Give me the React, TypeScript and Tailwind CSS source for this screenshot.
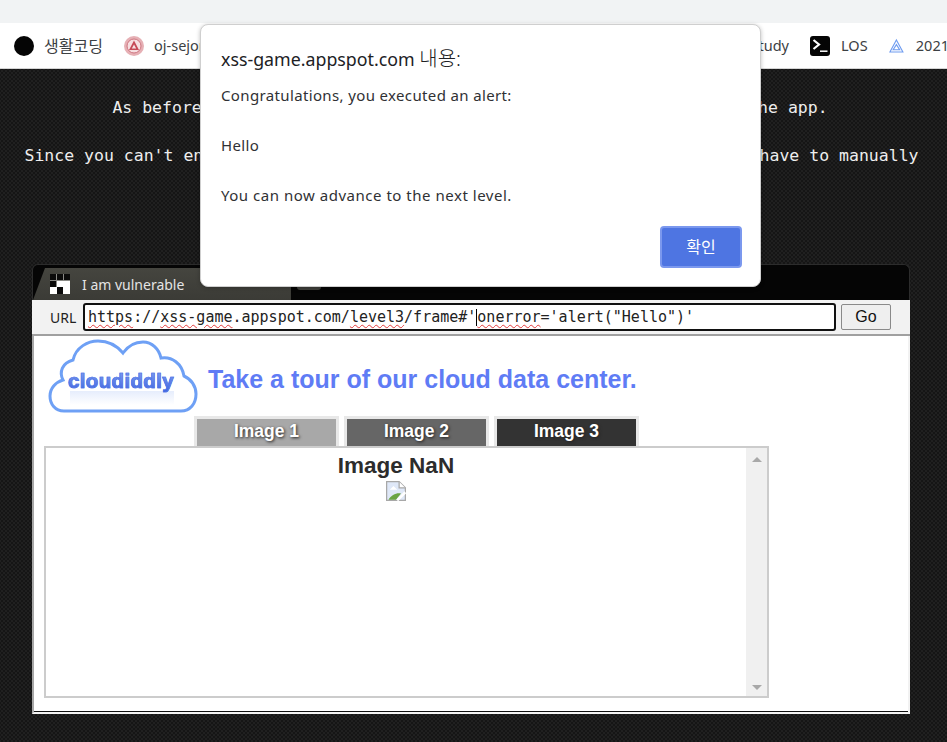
const mono = "font-['DejaVu_Sans_Mono','Liberation_Mono',monospace]";
const ui = "font-['Noto_Sans','Noto_Sans_CJK_KR',sans-serif]";
const arial = "font-['Liberation_Sans',Arial,sans-serif]";

const Bookmark = ({ icon, label, className, labelClass = "text-[14.5px]" }: { icon?: React.ReactNode; label: string; className: string; labelClass?: string }) => (
  <div className={`flex shrink-0 items-center gap-[10px] ${className}`}>
    {icon}
    <span className={`whitespace-nowrap text-[#3c4043] ${labelClass}`}>{label}</span>
  </div>
);

const SealIcon = () => (
  <svg width="20" height="20" viewBox="0 0 20 20" aria-hidden="true">
    <circle cx="10" cy="10" r="10" fill="#e6b0b5" />
    <circle cx="10" cy="10" r="7" fill="#f6dfe1" stroke="#cf7580" />
    <path d="M10 4.5 L15 14 H5 Z M10 8.5 L12.2 12.5 H7.8 Z" fill="#c64a57" fillRule="evenodd" />
  </svg>
);

const TerminalIcon = () => (
  <svg width="20" height="20" viewBox="0 0 20 20" aria-hidden="true">
    <rect width="20" height="20" rx="3" fill="#050505" />
    <path d="M3.5 4 L9 8.5 L3.5 13" fill="none" stroke="#fff" strokeWidth="2.2" />
    <path d="M10 15.2 H17.5" stroke="#fff" strokeWidth="1.5" />
  </svg>
);

const PrismIcon = () => (
  <svg width="16" height="16" viewBox="0 0 16 16" aria-hidden="true">
    <path d="M8 1.5 L15 14.5 H1 Z M8 6.5 L4.5 12 H11.5 Z" fill="none" stroke="#6f9cf0" strokeWidth="1.2" />
  </svg>
);

const CloudLogo = () => (
  <div className="relative mt-[3px] ml-[4px] h-[76px] w-[150px] shrink-0 self-start">
    <svg width="150" height="76" viewBox="0 0 150 76" className="absolute inset-0" aria-hidden="true">
      <path
        d="M16 72 C7 72 2 65 2 57 C2 49 8 43 15 41 C11 33 14 24 25 21 C28 8 40 2 50 2 C61 2 70 8 75 14 C80 7 87 3 95 3 C104 3 111 10 113 19 C124 17 134 25 136 37 C143 40 148 47 148 55 C148 65 142 72 133 72 Z"
        fill="#ffffff"
        stroke="#6ea0f5"
        strokeWidth="3"
      />
    </svg>
    <div className="absolute top-[52px] left-[22px] h-[14px] w-[104px] bg-linear-to-b from-[#e6edfc] to-white" />
    <span
      className={`absolute top-[30px] left-[20px] bg-linear-to-b from-[#86a2f2] to-[#3d63df] bg-clip-text text-[20.5px] leading-[24px] font-bold tracking-[0.35px] text-transparent [-webkit-text-stroke:0.7px_#4f74e6] ${arial}`}
    >
      cloudiddly
    </span>
  </div>
);

const BrokenImage = () => (
  <svg width="20" height="20" viewBox="0 0 16 16" aria-hidden="true">
    <path d="M0.5 0.5 H10.5 L15.5 5.5 V15.5 H0.5 Z" fill="#dfe8f8" stroke="#a8a8a8" />
    <path d="M10.5 0.5 V5.5 H15.5" fill="#fff" stroke="#a8a8a8" />
    <path d="M3 7 L6 4 L9 7 Z" fill="#fff" />
    <path d="M2 15 C4 11 9 9 12 10 L8 15 Z" fill="#6ba544" />
    <path d="M9 15.5 L15.5 9" stroke="#fff" strokeWidth="2" />
  </svg>
);

const Tab = ({ label, className }: { label: string; className: string }) => (
  <div className="border-x-[3px] border-t-[3px] border-[#e8e8e8]">
    <div
      className={`flex h-[27px] w-[139px] items-center justify-center pb-[2px] text-[17.5px] font-bold text-white [text-shadow:1px_1px_3px_#222] ${arial} ${className}`}
    >
      {label}
    </div>
  </div>
);

const SpellCheck = ({ children }: { children: string }) => (
  <span className="underline decoration-[#e23b3b] decoration-wavy decoration-1 underline-offset-2">{children}</span>
);

export default function App() {
  return (
    <div className="relative flex h-[742px] w-[947px] flex-col overflow-hidden bg-[#171717]">
      <div className="h-[23px] bg-[#f1f3f4]" />
      <div className={`flex h-[46px] items-center overflow-hidden border-b border-[#d5d5d5] bg-white pl-[14px] ${ui}`}>
        <Bookmark
          className="w-[110px]"
          icon={<span className="size-[20px] rounded-full bg-[#050505]" />}
          label="생활코딩"
          labelClass="text-[16px]"
        />
        <Bookmark className="w-[560px]" icon={<SealIcon />} label="oj-sejong" />
        <Bookmark className="w-[126px] justify-end pr-[21px]" label="Study" />
        <Bookmark className="w-[79px] gap-[11px]" icon={<TerminalIcon />} label="LOS" />
        <Bookmark className="w-[60px] gap-[12px]" icon={<PrismIcon />} label="2021" />
      </div>

      <main className="flex flex-1 flex-col bg-[radial-gradient(#202020_1px,transparent_1px),radial-gradient(#202020_1px,#151515_1px)] bg-size-[4px_4px] bg-position-[0_0,2px_2px] pt-[26px]">
        <div className={`flex flex-col items-center gap-[23px] pr-[4px] text-[16.5px] leading-[25px] whitespace-nowrap text-[#eeeeee] ${mono}`}>
          <p className="pr-[3px]">As before, you can also use the URL bar to interact with all of the app.</p>
          <p>Since you can't enter the address in the embedded frame's URL bar, so you have to manually</p>
        </div>

        <section className="mt-[96px] ml-[32px] flex w-[878px] flex-col">
          <div className="flex h-[36px] rounded-t-[6px] border border-b-0 border-[#2c2c2c] bg-[#050505]">
            <div className="mt-[3px] flex h-[32px] w-[258px] items-center gap-[12px] bg-linear-to-b from-[#45453f] to-[#3b3b36] pl-[17px] [clip-path:polygon(12px_0,100%_0,100%_100%,0_100%)]">
              <svg width="20" height="20" viewBox="0 0 30 30" shapeRendering="crispEdges" aria-hidden="true">
                <rect width="30" height="30" fill="#8a8a86" />
                <path d="M0 0h9v9H0zM11 0h8v9h-8zM21 0h9v9h-9zM0 10h9v9H0zM10 20h10v10H10z" fill="#0a0a0a" />
                <path d="M10 10h20v10H10zM0 20h10v10H0zM20 20h10v10H20z" fill="#fff" />
              </svg>
              <span className={`text-[14px] text-[#e4e4e4] ${ui}`}>I am vulnerable</span>
            </div>
            <div className="mt-[15px] ml-[6px] h-[10px] w-[24px] rounded-b-[3px] bg-[#3f3f3a]" />
          </div>

          <div className="flex h-[36px] items-center gap-[5px] border-b-[2px] border-[#a0a0a0] bg-[#f2f2f2] pl-[18px]">
            <span className={`w-[28px] text-[14px] text-[#222] ${ui}`}>URL</span>
            <div className={`flex h-[28px] w-[753px] items-center rounded-[3px] border-2 border-[#111] bg-white pl-[3px] text-[15px] text-[#222] whitespace-nowrap ${mono}`}>
              <SpellCheck>https</SpellCheck>://<SpellCheck>xss-game</SpellCheck>.appspot.com/<SpellCheck>level3</SpellCheck>/frame#'
              <span className="h-[17px] w-px bg-black" />
              <SpellCheck>onerror</SpellCheck>='alert("Hello")'
            </div>
            <button
              type="button"
              className={`h-[26px] w-[50px] rounded-[2px] border border-[#8a8a8a] bg-[#efefef] text-[16px] text-[#111] ${arial}`}
            >
              Go
            </button>
          </div>

          <div className="flex flex-col border-r-[2px] border-b-[2px] border-l-[2px] border-r-[#f2f2f2] border-b-[#f2f2f2] border-l-[#a8a8a8] bg-white">
            <div className="flex h-[375px] flex-col pl-[10px]">
              <div className="flex h-[80px] items-center gap-[10px]">
                <CloudLogo />
                <h1 className={`pt-[7px] text-[25px] font-bold whitespace-nowrap text-[#5f7cf5] ${arial}`}>
                  Take a tour of our cloud data center.
                </h1>
              </div>
              <div className="flex gap-[5px] pl-[150px]">
                <Tab label="Image 1" className="bg-[#a8a8a8]" />
                <Tab label="Image 2" className="bg-[#666666]" />
                <Tab label="Image 3" className="bg-[#333333]" />
              </div>
              <div className="flex h-[252px] w-[725px] border-2 border-[#cccccc] bg-white">
                <div className="flex flex-1 flex-col items-center">
                  <span className={`pt-[3px] text-[22.5px] leading-[30px] font-bold text-[#2c2c2c] ${arial}`}>Image NaN</span>
                  <BrokenImage />
                </div>
                <div className="flex w-[21px] flex-col items-center justify-between bg-[#f0f0f0] pt-[9px] pb-[6px]">
                  <span className="h-0 w-0 border-x-[5px] border-b-[5px] border-x-transparent border-b-[#a8a8a8]" />
                  <span className="h-0 w-0 border-x-[5px] border-t-[5px] border-x-transparent border-t-[#a8a8a8]" />
                </div>
              </div>
            </div>
            <div className="h-px bg-[#111]" />
          </div>
        </section>
      </main>

      <div className={`absolute top-[24px] left-[200px] flex h-[263px] w-[561px] flex-col rounded-[8px] border border-[#cfcfcf] bg-white pt-[21px] pr-[18px] pl-[20px] shadow-[0_1px_4px_rgba(0,0,0,0.25)] ${ui}`}>
        <h2 className="text-[17.8px] leading-[26px] text-[#202124]">
          xss-game.appspot.com <span className="text-[20px] font-light">내용:</span>
        </h2>
        <div className="mt-[11px] flex flex-col gap-[25px] text-[15px] leading-[25px] tracking-[0.36px] text-[#303134]">
          <p>Congratulations, you executed an alert:</p>
          <p>Hello</p>
          <p className="tracking-[0.52px]">You can now advance to the next level.</p>
        </div>
        <div className="mt-[18px] flex justify-end">
          <button
            type="button"
            className="h-[42px] w-[82px] rounded-[4px] border-2 border-[#7b98ee] bg-[#4e75e2] text-[16px] text-white"
          >
            확인
          </button>
        </div>
      </div>
    </div>
  );
}
